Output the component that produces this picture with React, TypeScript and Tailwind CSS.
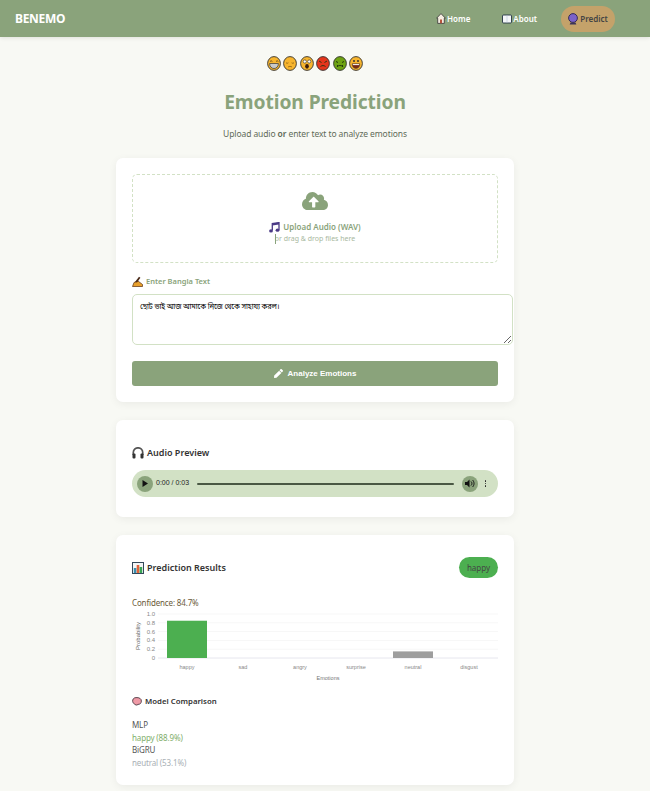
import { FaCloudUploadAlt, FaPen } from 'react-icons/fa'

const FONT = { fontFamily: '"Noto Sans", "Open Sans", sans-serif' }

// small faces drawn by hand, the picture has colour emoji here
function Face({ fill, children }: { fill: string; children: React.ReactNode }) {
  return (
    <svg width="14" height="15" viewBox="0 0 14 15" className="shrink-0">
      <ellipse cx="7" cy="7.5" rx="6.4" ry="6.9" fill={fill} stroke="#333" strokeWidth="0.9" />
      {children}
    </svg>
  )
}

function Emojis() {
  return (
    <div className="flex justify-center gap-[2.5px]">
      <Face fill="#f7b52e">
        <path d="M3 5.500q1-1.500 2.400 0M9 5.500q1-1.500 2.400 0" stroke="#5a3a10" strokeWidth="0.8" fill="none" />
        <path d="M2.600 7.500h8.800c0 3.500-2.300 5-4.400 5s-4.400-1.500-4.400-5z" fill="#c9c9c9" stroke="#333" strokeWidth="0.7" />
      </Face>
      <Face fill="#f7b52e">
        <path d="M3 6.800q1.200 1 2.400 0M8.600 6.800q1.200 1 2.400 0M5 11c1-.8 3-.8 4 0" stroke="#8a5f14" strokeWidth="0.8" fill="none" />
      </Face>
      <Face fill="#f7b52e">
        <circle cx="4.800" cy="5.500" r="1.600" fill="#fff" stroke="#333" strokeWidth="0.6" />
        <circle cx="9.200" cy="5.500" r="1.600" fill="#fff" stroke="#333" strokeWidth="0.6" />
        <ellipse cx="7" cy="10.300" rx="1.800" ry="2.400" fill="#3a1c0c" />
      </Face>
      <Face fill="#e5351c">
        <path d="M3 5l2.500 1.500M11 5L8.500 6.500" stroke="#331" />
        <path d="M4.500 10.500c1.500-1.200 3.500-1.200 5 0" stroke="#331" fill="none" />
      </Face>
      <Face fill="#6ea312">
        <path d="M3 5.500l2 1M11 5.500l-2 1" stroke="#24390a" />
        <path d="M4 11c1-2 5-2 6 0M4.500 9v2M9.500 9v2" stroke="#24390a" fill="none" />
      </Face>
      <Face fill="#f7b52e">
        <circle cx="5" cy="5" r="1" fill="#333" />
        <circle cx="9" cy="5" r="1" fill="#333" />
        <path d="M3.200 7.800h7.600c0 3.200-1.700 4.600-3.800 4.600S3.200 11 3.200 7.800z" fill="#7a2a14" stroke="#333" strokeWidth="0.5" />
        <path d="M3.800 8.100h6.400v1H3.800z" fill="#fff" />
      </Face>
    </div>
  )
}

function HomeIcon() {
  return (
    <svg width="10" height="11" viewBox="0 0 10 11">
      <path d="M5 .6L.6 5.200h1.100v5.200h6.600V5.200h1.100z" fill="#f4ece0" stroke="#333" strokeWidth="0.8" />
      <rect x="4" y="6.500" width="2" height="3.800" fill="#b5533c" />
    </svg>
  )
}

function BookIcon() {
  return (
    <svg width="10" height="10" viewBox="0 0 10 10">
      <rect x=".5" y="1" width="9" height="8" rx="1" fill="#f4f6f8" stroke="#234" strokeWidth="0.9" />
      <path d="M5 1.500v7" stroke="#bcd" strokeWidth="0.7" />
    </svg>
  )
}

function BallIcon() {
  return (
    <svg width="10" height="12" viewBox="0 0 10 12">
      <circle cx="5" cy="5" r="4.400" fill="#7b62c9" stroke="#2b2350" strokeWidth="0.9" />
      <path d="M2.500 9.500h5l.8 2h-6.600z" fill="#3b3358" />
    </svg>
  )
}

function NoteIcon() {
  return (
    <svg width="11" height="11" viewBox="0 0 11 11">
      <path d="M3.300 8.500V1.600L10 .6v7.400" fill="none" stroke="#4b3a86" strokeWidth="1.300" />
      <path d="M3.300 1.600L10 .6v2L3.300 3.600z" fill="#4b3a86" />
      <ellipse cx="2" cy="8.900" rx="1.900" ry="1.600" fill="#4b3a86" />
      <ellipse cx="8.500" cy="8.200" rx="1.900" ry="1.600" fill="#4b3a86" />
    </svg>
  )
}

function WritingIcon() {
  return (
    <svg width="11" height="11" viewBox="0 0 11 11">
      <path d="M.5 10.500L2 6.500l4-1.500 4.500 3.500v2z" fill="#e8a02c" stroke="#5a2e10" strokeWidth="0.7" />
      <path d="M3 6L7 .8l1.400 1L5 6.500z" fill="#4a2a18" />
    </svg>
  )
}

function HeadphonesIcon() {
  return (
    <svg width="12" height="12" viewBox="0 0 12 12">
      <path d="M1.300 8V5.500a4.700 4.700 0 019.400 0V8" fill="none" stroke="#555" strokeWidth="1.700" />
      <rect x=".5" y="6.500" width="3" height="5" rx="1" fill="#333" />
      <rect x="8.500" y="6.500" width="3" height="5" rx="1" fill="#333" />
    </svg>
  )
}

function BarsIcon() {
  return (
    <svg width="12" height="12" viewBox="0 0 12 12">
      <rect x=".5" y=".5" width="11" height="11" fill="#f4f6f6" stroke="#34495a" />
      <rect x="1.800" y="6" width="2.600" height="5" fill="#3a8fb0" />
      <rect x="4.700" y="3" width="2.600" height="8" fill="#e0623a" />
      <rect x="7.600" y="5" width="2.600" height="6" fill="#3aa655" />
    </svg>
  )
}

function BrainIcon() {
  return (
    <svg width="10" height="9" viewBox="0 0 10 9">
      <path d="M.7 4.500C.2 2.500 1.800.6 4 .6c3-.3 5.500 1 5.400 3.500C9.300 6.200 8 7.500 6 7.400 5 8.500 3 8.200 2.800 7 1.800 6.900 1 6 .7 4.500z" fill="#ef9aa6" stroke="#3a2a34" strokeWidth="0.8" />
    </svg>
  )
}

// chart labels
const BARS = [
  { label: 'happy', cx: 55, value: 0.847, color: '#4caf50' },
  { label: 'sad', cx: 111, value: 0, color: '#2196f3' },
  { label: 'angry', cx: 168, value: 0, color: '#f44336' },
  { label: 'surprise', cx: 224, value: 0, color: '#ffc107' },
  { label: 'neutral', cx: 281, value: 0.15, color: '#9e9e9e' },
  { label: 'disgust', cx: 337, value: 0, color: '#9c27b0' },
]

function Chart() {
  const top = 5
  const h = 44
  return (
    <svg width="366" height="75" viewBox="0 0 366 75" className="block" style={{ fontFamily: '"Liberation Sans", sans-serif' }}>
      {[1, 0.8, 0.6, 0.4, 0.2, 0].map((t) => {
        const y = top + h - t * h
        return (
          <g key={t}>
            <line x1="26" x2="366" y1={y} y2={y} stroke={t === 0 ? '#e6e6ee' : '#f7f7f7'} />
            <text x="23" y={y + 2} textAnchor="end" fontSize="6" fill="#888">
              {t === 0 ? '0' : t.toFixed(1)}
            </text>
          </g>
        )
      })}
      {BARS.map((b) => (
        <g key={b.label}>
          {b.value > 0 && <rect x={b.cx - 20} y={top + h - b.value * h} width="40" height={b.value * h} fill={b.color} />}
          <text x={b.cx} y="60" textAnchor="middle" fontSize="5.500" fill="#888">
            {b.label}
          </text>
        </g>
      ))}
      <text x="196" y="71" textAnchor="middle" fontSize="5.500" fill="#777">Emotions</text>
      <text transform="translate(7.500 27) rotate(-90)" textAnchor="middle" fontSize="6" fill="#666">Probability</text>
    </svg>
  )
}

export default function App() {
  return (
    <div className="min-h-[791px] bg-[#f8f9f4] text-[#333]" style={FONT}>
      <nav className="flex h-[37px] items-center justify-between bg-[#8aa37b] pl-[15px] pr-[35px] shadow-[0_1px_4px_rgba(0,0,0,0.1)]">
        <span className="text-[12px] font-bold tracking-[-0.3px] text-white">BENEMO</span>
        <div className="flex items-center gap-[16px] text-[8px] font-semibold">
          <a className="flex items-center gap-[1px] px-[8px] text-white"><HomeIcon /> Home</a>
          <a className="flex items-center gap-[1px] px-[8px] text-white"><BookIcon /> About</a>
          <a className="flex h-[26px] w-[54px] items-center justify-center gap-[2px] rounded-full bg-[#c4a26a] text-[#444]"><BallIcon /> Predict</a>
        </div>
      </nav>

      <main className="w-[630px] overflow-hidden">
        <div className="mx-auto w-[398px] pt-[19px]">
          <Emojis />
          <h1 className="mt-[17px] text-center text-[19.250px] font-bold leading-[28px] tracking-[-0.1px] text-[#8aa37b]">Emotion Prediction</h1>
          <p className="mt-[11px] text-center text-[8.500px] leading-[14px] tracking-[-0.1px] text-[#5f6b58]">
            Upload audio <span className="font-semibold">or</span> enter text to analyze emotions
          </p>

          <section className="mt-[17px] rounded-[7px] bg-white p-[16px] shadow-[0_2px_8px_rgba(0,0,0,0.06)]">
            <div className="flex h-[89px] flex-col items-center rounded-[5px] border border-dashed border-[#d2e1c5] pt-[13px]">
              <FaCloudUploadAlt className="text-[#8aa37b]" size={26} />
              <div className="mt-[7px] flex items-center gap-[3px] text-[8px] font-semibold leading-[12px] text-[#8aa37b]">
                <NoteIcon /> Upload Audio (WAV)
              </div>
              <div className="relative text-[7px] leading-[12px] text-[#a8b8a0]">
                <span className="absolute left-0 top-[1px] h-[10px] w-px bg-[#8aa37b]" />
                or drag &amp; drop files here
              </div>
            </div>

            <label className="mt-[12px] flex items-center gap-[3px] text-[7.500px] font-semibold leading-[12px] text-[#8aa37b]">
              <WritingIcon /> Enter Bangla Text
            </label>
            <textarea
              readOnly
              className="mt-[7px] block h-[51px] w-[381px] rounded-[5px] border border-[#d2e1c5] px-[7px] py-[3px] text-[7.300px] leading-[16px] tracking-[-0.15px] text-black outline-none"
              style={{ fontFamily: '"Noto Sans", "Noto Sans Bengali", "Noto Sans CJK SC", sans-serif' }}
              value="ছোট ভাই আজ আমাকে নিজে থেকে সাহায্য করল।"
            />
            <button className="mt-[16px] flex h-[25px] w-full items-center justify-center gap-[5px] rounded-[3px] bg-[#8aa37b] text-[8px] font-bold text-white" style={{ fontFamily: '"Liberation Sans", sans-serif' }}>
              <FaPen size={9} /> Analyze Emotions
            </button>
          </section>

          <section className="mt-[18px] rounded-[7px] bg-white px-[16px] pb-[20px] pt-[26px] shadow-[0_2px_8px_rgba(0,0,0,0.06)]">
            <h3 className="flex items-center gap-[3px] text-[9px] font-semibold leading-[14px] text-[#333]">
              <HeadphonesIcon /> Audio Preview
            </h3>
            <div className="mt-[10px] flex h-[27px] items-center rounded-full bg-[#d2e1c5] pl-[5px] pr-[12px]" style={{ fontFamily: '"Liberation Sans", sans-serif' }}>
              <span className="flex h-4 w-4 items-center justify-center rounded-full bg-[#8aa37b]">
                <svg width="6" height="7" viewBox="0 0 6 7"><path d="M.5 0v7L6 3.500z" fill="#111" /></svg>
              </span>
              <span className="ml-[3px] text-[7px] text-[#222]">0:00 / 0:03</span>
              <span className="ml-[8px] h-[2px] flex-1 rounded bg-[#4a5844]" />
              <span className="ml-[8px] flex h-4 w-4 items-center justify-center rounded-full bg-[#8aa37b]">
                <svg width="10" height="9" viewBox="0 0 10 9">
                  <path d="M0 3v3h2l2.500 2.500v-8L2 3z" fill="#111" />
                  <path d="M6 2.500c1.200 1 1.200 3 0 4M7.500 1c2 1.800 2 5.200 0 7" stroke="#111" fill="none" />
                </svg>
              </span>
              <span className="ml-[7px] flex flex-col gap-[1px]">
                <i className="h-[1.500px] w-[1.500px] rounded-full bg-[#222]" />
                <i className="h-[1.500px] w-[1.500px] rounded-full bg-[#222]" />
                <i className="h-[1.500px] w-[1.500px] rounded-full bg-[#222]" />
              </span>
            </div>
          </section>

          <section className="mb-[6px] mt-[18px] rounded-[7px] bg-white px-[16px] pb-[16px] pt-[22px] shadow-[0_2px_8px_rgba(0,0,0,0.06)]">
            <div className="flex items-center justify-between">
              <h3 className="flex items-center gap-[3px] text-[9px] font-semibold leading-[14px] text-[#333]">
                <BarsIcon /> Prediction Results
              </h3>
              <span className="flex h-[21px] w-[39px] items-center justify-center rounded-full bg-[#4caf50] text-[8px] text-[#444]">happy</span>
            </div>
            <div className="mt-[19px] text-[8px] leading-[12px] tracking-[-0.15px] text-[#6b5b3a]">Confidence: 84.7%</div>
            <Chart />
            <h4 className="mt-[11px] flex items-center gap-[3px] text-[7.800px] font-semibold leading-[12px] text-[#333]">
              <BrainIcon /> Model Comparison
            </h4>
            <div className="mt-[12px] text-[8px] leading-[12.500px] tracking-[-0.15px]">
              <div className="text-[#555]">MLP</div>
              <div className="text-[#7fae6a]">happy (88.9%)</div>
              <div className="text-[#555]">BiGRU</div>
              <div className="text-[#a9b0b5]">neutral (53.1%)</div>
            </div>
          </section>
        </div>
      </main>
    </div>
  )
}
